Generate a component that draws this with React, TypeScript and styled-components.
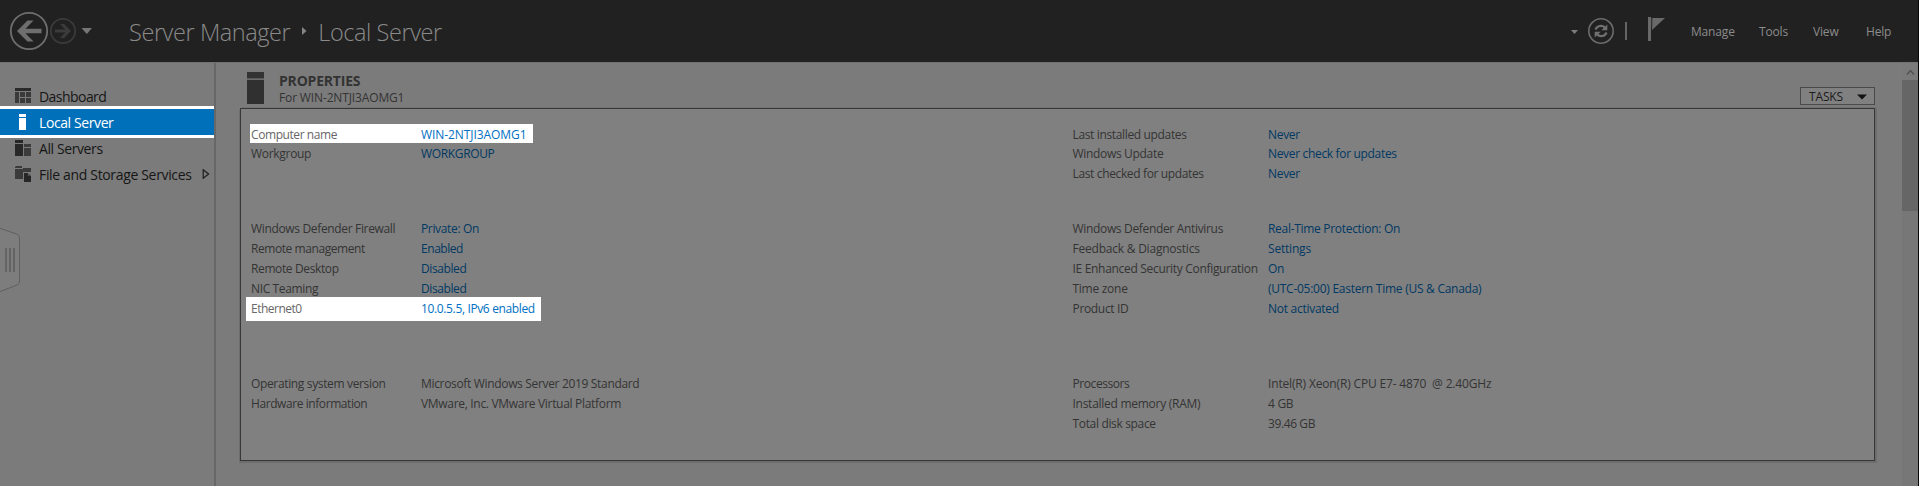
import React from "react";
import styled, { createGlobalStyle, css } from "styled-components";

const GlobalStyle = createGlobalStyle`
  * { box-sizing: border-box; }
  body {
    margin: 0;
    overflow: hidden;
    background: #7b7b7b;
    font-family: "Open Sans", "Segoe UI", sans-serif;
  }
`;

const Window = styled.div`
  display: flex;
  flex-direction: column;
  height: 486px;
  border-right: 1px solid #050505;
`;

const TopBar = styled.header`
  display: flex;
  align-items: flex-start;
  height: 62px;
  flex: none;
  background: #212121;
`;

const NavButtons = styled.div`
  width: 129px;
  height: 62px;
  flex: none;
`;

const Breadcrumb = styled.h1`
  display: flex;
  margin: 0;
  padding-top: 16px;
  height: 62px;
  font-size: 23.5px;
  font-weight: 300;
  line-height: 32px;
  letter-spacing: -0.42px;
  color: #8a8a8a;
  white-space: pre;
`;

const CrumbArrow = styled.svg`
  width: 6px;
  height: 8px;
  margin: 11px 11px 0 11px;
`;

const ToolIcons = styled.div`
  margin-left: auto;
  width: 100px;
  height: 62px;
`;

const Menu = styled.nav`
  display: grid;
  grid-template-columns: 68px 54px 53px 51px;
  width: 228px;
  padding: 23px 0 0 1px;
  margin-left: 20px;
  font-size: 12px;
  line-height: 17px;
  color: #8c8c8c;
`;

const MenuItem = styled.span`
  letter-spacing: -0.17px;
`;

const Body = styled.div`
  display: flex;
  flex: 1;
  min-height: 0;
  border-top: 1px solid #727272;
`;

const Sidebar = styled.aside`
  width: 216px;
  flex: none;
  border-right: 2px solid #676767;
  padding-top: 20px;
`;

const SideItem = styled.div<{ $active?: boolean }>`
  display: flex;
  align-items: center;
  height: 26px;
  font-size: 14px;
  color: #161616;
  ${(p) =>
    p.$active &&
    css`
      background: #0070ba;
      color: #fff;
      box-shadow: 0 -3px #fff, 0 3px #fff;
      position: relative;
    `}
`;

const SideIcon = styled.svg`
  width: 16px;
  height: 16px;
  margin: 0 8px 0 15px;
  flex: none;
`;

const SideLabel = styled.span<{ $track: number }>`
  letter-spacing: ${(p) => p.$track}px;
  line-height: 20px;
  padding-top: 2px;
  white-space: nowrap;
  flex: 1;
`;

const Expander = styled.svg`
  width: 8px;
  height: 10px;
  margin-right: 4px;
`;

const Handle = styled.svg`
  display: block;
  width: 21px;
  height: 66px;
  margin-top: 40px;
`;

const Main = styled.main`
  flex: 1;
  padding: 8px 27px 0 24px;
  min-width: 0;
`;

const SectionHead = styled.div`
  display: flex;
  height: 37px;
`;

const ServerIcon = styled.svg`
  width: 17px;
  height: 32px;
  margin: 1px 15px 0 7px;
`;

const Headings = styled.div`
  flex: 1;
  padding-top: 1px;
  color: #333;
`;

const Heading = styled.h2`
  margin: 0;
  font-size: 14px;
  font-weight: 700;
  line-height: 17px;
  letter-spacing: -0.2px;
`;

const SubHeading = styled.div`
  font-size: 12px;
  line-height: 18px;
  letter-spacing: -0.14px;
`;

const TasksButton = styled.button`
  display: flex;
  align-items: center;
  justify-content: space-between;
  width: 75px;
  height: 18px;
  margin-top: 16px;
  padding: 1px 7px 0 8px;
  border: 1px solid #4a4a4a;
  background: #808080;
  font: 12px/16px "Open Sans", sans-serif;
  letter-spacing: -0.15px;
  color: #1b1b1b;
`;

const Panel = styled.section`
  display: grid;
  grid-template-columns: 821.5px 1fr;
  height: 353px;
  padding: 16px 0 0 10px;
  border: 1px solid #373737;
  background: #808080;
  box-shadow: 2px 2px 0 #6d6d6d, -1px 2px 0 #6d6d6d, 2px -1px 0 #727272;
`;

const Column = styled.div`
  display: grid;
  grid-template-rows: 94px 155px auto;
`;

const Group = styled.dl`
  margin: 0;
`;

const Row = styled.div<{ $labelWidth: number; $short?: boolean; $spot?: "name" | "net" }>`
  display: grid;
  grid-template-columns: ${(p) => p.$labelWidth}px 1fr;
  height: ${(p) => (p.$short ? 19 : 20)}px;
  padding-bottom: 1px;
  font-size: 12px;
  line-height: 19px;
  color: #343434;
  white-space: pre;
  ${(p) =>
    p.$spot &&
    css`
      background: #fff;
      color: #676767;
    `}
  ${(p) =>
    p.$spot === "name" &&
    css`
      width: 283px;
      margin: -1px 0 1px -1px;
      padding: 1px 0 0 1px;
    `}
  ${(p) =>
    p.$spot === "net" &&
    css`
      width: 295px;
      height: 24px;
      margin: -2px 0 0 -5px;
      padding: 2px 0 0 5px;
    `}
`;

const Label = styled.dt<{ $track: number }>`
  letter-spacing: ${(p) => p.$track}px;
`;

const Value = styled.dd<{ $track: number; $link?: boolean; $lit?: boolean }>`
  margin: 0;
  letter-spacing: ${(p) => p.$track}px;
  color: ${(p) => (p.$lit ? "#0070c4" : p.$link ? "#003963" : "inherit")};
`;

const ScrollBar = styled.div`
  width: 16px;
  flex: none;
  background: #777;
`;

const ScrollUp = styled.svg`
  display: block;
  width: 16px;
  height: 17px;
  background: #7a7a7a;
`;

const ScrollThumb = styled.div`
  height: 131px;
  background: #666;
`;

type Entry = {
  label: string;
  lt: number;
  value: string;
  vt: number;
  link?: boolean;
  short?: boolean;
  spot?: "name" | "net";
};

const left: Entry[][] = [
  [
    { label: "Computer name", lt: -0.42, value: "WIN-2NTJI3AOMG1", vt: -0.07, link: true, short: true, spot: "name" },
    { label: "Workgroup", lt: -0.3, value: "WORKGROUP", vt: -0.35, link: true },
  ],
  [
    { label: "Windows Defender Firewall", lt: -0.34, value: "Private: On", vt: -0.35, link: true },
    { label: "Remote management", lt: -0.43, value: "Enabled", vt: -0.45, link: true },
    { label: "Remote Desktop", lt: -0.38, value: "Disabled", vt: -0.4, link: true },
    { label: "NIC Teaming", lt: -0.37, value: "Disabled", vt: -0.4, link: true },
    { label: "Ethernet0", lt: -0.5, value: "10.0.5.5, IPv6 enabled", vt: -0.36, link: true, spot: "net" },
  ],
  [
    { label: "Operating system version", lt: -0.35, value: "Microsoft Windows Server 2019 Standard", vt: -0.33 },
    { label: "Hardware information", lt: -0.42, value: "VMware, Inc. VMware Virtual Platform", vt: -0.31 },
  ],
];

const right: Entry[][] = [
  [
    { label: "Last installed updates", lt: -0.35, value: "Never", vt: -0.32, link: true, short: true },
    { label: "Windows Update", lt: -0.32, value: "Never check for updates", vt: -0.33, link: true },
    { label: "Last checked for updates", lt: -0.36, value: "Never", vt: -0.32, link: true },
  ],
  [
    { label: "Windows Defender Antivirus", lt: -0.33, value: "Real-Time Protection: On", vt: -0.3, link: true },
    { label: "Feedback & Diagnostics", lt: -0.22, value: "Settings", vt: -0.2, link: true },
    { label: "IE Enhanced Security Configuration", lt: -0.31, value: "On", vt: -0.3, link: true },
    { label: "Time zone", lt: -0.27, value: "(UTC-05:00) Eastern Time (US & Canada)", vt: -0.26, link: true },
    { label: "Product ID", lt: -0.33, value: "Not activated", vt: -0.27, link: true },
  ],
  [
    { label: "Processors", lt: -0.42, value: "Intel(R) Xeon(R) CPU E7- 4870  @ 2.40GHz", vt: -0.16 },
    { label: "Installed memory (RAM)", lt: -0.27, value: "4 GB", vt: -0.3 },
    { label: "Total disk space", lt: -0.34, value: "39.46 GB", vt: -0.4 },
  ],
];

function Properties({ groups, labelWidth }: { groups: Entry[][]; labelWidth: number }) {
  return (
    <Column>
      {groups.map((rows, i) => (
        <Group key={i}>
          {rows.map((r) => (
            <Row key={r.label} $labelWidth={labelWidth} $short={r.short} $spot={r.spot}>
              <Label $track={r.lt}>{r.label}</Label>
              <Value $track={r.vt} $link={r.link} $lit={!!r.spot}>
                {r.value}
              </Value>
            </Row>
          ))}
        </Group>
      ))}
    </Column>
  );
}

export default function App() {
  return (
    <>
      <GlobalStyle />
      <Window>
        <TopBar>
          <NavButtons>
            <svg width="129" height="62" fill="none">
              <circle cx="29" cy="31" r="18.2" stroke="#6e6e6e" strokeWidth="1.8" />
              <path d="M17 31 27.5 20.5H33.5L25.5 28.8H41.5V33.2H25.5L33.5 41.5H27.5Z" fill="#6e6e6e" />
              <circle cx="63" cy="31" r="12.2" stroke="#3b3b3b" strokeWidth="1.7" />
              <path d="M71 31 64 24H60L65.3 29.4H55V32.6H65.3L60 38H64Z" fill="#3b3b3b" />
              <path d="M81.5 28H92L86.8 34Z" fill="#767676" />
            </svg>
          </NavButtons>
          <Breadcrumb>
            Server Manager
            <CrumbArrow viewBox="0 0 6 8">
              <path d="M1 0 5.5 4 1 8Z" fill="#858585" />
            </CrumbArrow>
            Local Server
          </Breadcrumb>
          <ToolIcons>
            <svg width="100" height="62" viewBox="1570 0 100 62" fill="none">
              <path d="M1571 30H1578L1574.5 34Z" fill="#7c7c7c" />
              <circle cx="1601" cy="31" r="12.2" stroke="#6c6c6c" strokeWidth="1.6" />
              <path d="M1595.5 29.5C1597 25.5 1602 24.8 1605 27.6" stroke="#707070" strokeWidth="2.2" />
              <path d="M1607.3 24.5V30.3H1601.3Z" fill="#707070" />
              <path d="M1606.5 32.5C1605 36.5 1600 37.2 1597 34.4" stroke="#707070" strokeWidth="2.2" />
              <path d="M1594.7 37.5V31.7H1600.7Z" fill="#707070" />
              <path d="M1626 22V40" stroke="#777" strokeWidth="1.6" />
              <path d="M1649.5 17V41" stroke="#696969" strokeWidth="3" />
              <path d="M1652 18H1665L1652 30Z" fill="#696969" />
              <path d="M1652 18V27" stroke="#444" strokeWidth="1" />
            </svg>
          </ToolIcons>
          <Menu>
            <MenuItem>Manage</MenuItem>
            <MenuItem>Tools</MenuItem>
            <MenuItem>View</MenuItem>
            <MenuItem>Help</MenuItem>
          </Menu>
        </TopBar>
        <Body>
          <Sidebar>
            <SideItem>
              <SideIcon viewBox="0 0 16 16">
                <path d="M0 0H16V3H0Z" fill="#2a2a2a" />
                <path d="M0 4H4V15H0ZM5 4H10V9H5ZM11 4H16V9H11ZM5 10H10V15H5ZM11 10H16V15H11Z" fill="#3a3a3a" />
              </SideIcon>
              <SideLabel $track={-0.55}>Dashboard</SideLabel>
            </SideItem>
            <SideItem $active>
              <SideIcon viewBox="0 0 16 16">
                <path d="M4 0H11V3H4ZM4 4H11V16H4Z" fill="#fff" />
              </SideIcon>
              <SideLabel $track={-0.4}>Local Server</SideLabel>
            </SideItem>
            <SideItem>
              <SideIcon viewBox="0 0 16 16">
                <path d="M0 0H8V3H0ZM0 4H8V16H0Z" fill="#282828" />
                <path d="M9 4H16V7H9ZM9 8H16V16H9Z" fill="#3c3c3c" />
              </SideIcon>
              <SideLabel $track={-0.4}>All Servers</SideLabel>
            </SideItem>
            <SideItem>
              <SideIcon viewBox="0 0 16 16">
                <path d="M0 1 1 0H7V2H0ZM0 3H8V13H0Z" fill="#3a3a3a" />
                <path d="M8 2H16V6H8Z" fill="#3a3a3a" />
                <path d="M9 7H13L16 9.5V16H9Z" fill="#262626" />
                <path d="M13.3 6.3V9.2H16" stroke="#777" strokeWidth="0.8" fill="none" />
              </SideIcon>
              <SideLabel $track={-0.34}>File and Storage Services</SideLabel>
              <Expander viewBox="0 0 8 10">
                <path d="M1.2 0.8 6.6 5 1.2 9.2Z" fill="none" stroke="#1e1e1e" strokeWidth="1.2" />
              </Expander>
            </SideItem>
            <Handle viewBox="0 0 21 66">
              <path d="M-1 1 17 7.2Q19.5 8.2 19.5 11V54Q19.5 57 17 58L-1 65" fill="#7d7d7d" stroke="#5f5f5f" />
              <path d="M6 21V45M10 21V45M14 21V45" stroke="#626262" strokeWidth="1.8" />
            </Handle>
          </Sidebar>
          <Main>
            <SectionHead>
              <ServerIcon viewBox="0 0 17 32">
                <path d="M0 0H17V6.5H0Z" fill="#333" />
                <path d="M0 8H17V32H0Z" fill="#303030" />
                <path d="M0 7.2H17" stroke="#666" />
              </ServerIcon>
              <Headings>
                <Heading>PROPERTIES</Heading>
                <SubHeading>For WIN-2NTJI3AOMG1</SubHeading>
              </Headings>
              <TasksButton>
                TASKS
                <svg width="10" height="6">
                  <path d="M0 0.5H10L5 5.5Z" fill="#111" />
                </svg>
              </TasksButton>
            </SectionHead>
            <Panel>
              <Properties groups={left} labelWidth={170} />
              <Properties groups={right} labelWidth={195.5} />
            </Panel>
          </Main>
          <ScrollBar>
            <ScrollUp viewBox="0 0 16 17">
              <path d="M5 11.5 8.5 7.5 12 11.5" stroke="#505050" strokeWidth="1.4" fill="none" />
            </ScrollUp>
            <ScrollThumb />
          </ScrollBar>
        </Body>
      </Window>
    </>
  );
}
